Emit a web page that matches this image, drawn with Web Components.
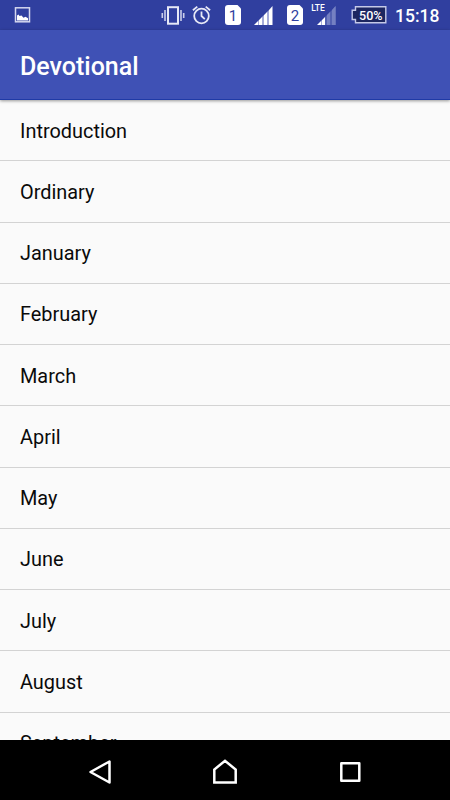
<!DOCTYPE html>
<html lang="en">
<head>
<meta charset="utf-8">
<title>Devotional</title>
<style>
  body {
    margin: 0;
    height: 800px;
    overflow: hidden;
    font-family: Roboto, sans-serif;
    background: #fafafa;
  }
</style>
</head>
<body>
<phone-screen>
  <status-bar slot="status"></status-bar>
  <app-bar slot="header">Devotional</app-bar>
  <list-item>Introduction</list-item>
  <list-item>Ordinary</list-item>
  <list-item>January</list-item>
  <list-item>February</list-item>
  <list-item>March</list-item>
  <list-item>April</list-item>
  <list-item>May</list-item>
  <list-item>June</list-item>
  <list-item>July</list-item>
  <list-item>August</list-item>
  <list-item>September</list-item>
  <nav-bar slot="nav"></nav-bar>
</phone-screen>

<script>
class PhoneScreen extends HTMLElement {
  constructor() {
    super();
    this.attachShadow({ mode: "open" });
    this.shadowRoot.innerHTML = `
      <style>
        :host {
          display: flex;
          flex-direction: column;
          width: 450px;
          height: 800px;
        }
        .list {
          flex: 1;
          min-height: 0;
          overflow: hidden;
          background: #fafafa;
        }
      </style>
      <slot name="status"></slot>
      <slot name="header"></slot>
      <div class="list"><slot></slot></div>
      <slot name="nav"></slot>
    `;
  }
}

class StatusBar extends HTMLElement {
  constructor() {
    super();
    this.attachShadow({ mode: "open" });
    this.shadowRoot.innerHTML = `
      <style>
        :host {
          display: flex;
          justify-content: space-between;
          flex: none;
          height: 30px;
          padding: 0 11px 0 14px;
          background: #303f9f;
          color: #fff;
        }
        svg {
          display: block;
          flex: none;
        }
        .right {
          display: flex;
        }
        .vibrate { margin-right: 7px; }
        .alarm { margin-right: 14px; }
        .signal { margin: 0 13px 0 12px; }
        .lte { margin: 0 15px 0 6px; }
        .clock {
          width: 44px;
          margin-left: 8px;
          font-size: 17.5px;
          font-weight: 500;
          line-height: 32px;
          white-space: nowrap;
        }
        text {
          font-family: Roboto, sans-serif;
          font-weight: 500;
        }
        .sim text {
          font-size: 15px;
          font-weight: 400;
          text-anchor: middle;
          fill: #303f9f;
        }
      </style>
      <svg width="17" height="30">
        <rect x="1.5" y="7.8" width="14" height="14" fill="none" stroke="#d5d8ef" stroke-width="1.5"/>
        <path d="M3 20.5v-5l1.5-1 1 1.5 2-.5 2 2.2 2-1 2.5 1.5v2.3z" fill="#fff"/>
      </svg>
      <div class="right">
        <svg class="vibrate" width="24" height="30" fill="none" stroke="#c9cdea" stroke-width="1.6">
          <rect x="7" y="7.2" width="10" height="16.5" stroke="#e6e8f6" stroke-width="2"/>
          <path d="M4 10v11M1.3 13v5M20 10v11M22.7 13v5"/>
        </svg>
        <svg class="alarm" width="19" height="30" fill="none" stroke="#e6e8f6" stroke-width="1.8">
          <circle cx="9.5" cy="16" r="7.3"/>
          <path d="M9.5 11.5V16l3.3 3.2M.9 10.2l4.4-3.6M18.1 10.2l-4.4-3.6"/>
        </svg>
        <svg class="sim" width="16" height="30">
          <path d="M3 5h9.5L16 8.500V22q0 3-3 3H3q-3 0-3-3V8q0-3 3-3z" fill="#fff"/>
          <text x="8" y="21">1</text>
        </svg>
        <svg class="signal" width="21" height="30">
          <path d="M1 25l4-4v4z" fill="#fff"/>
          <path d="M6 20l3-3v8H6zM11 15l3-3v13h-3zM16 10l3.5-4v19H16z" fill="#fff"/>
          <path d="M5 21l1-1v5H5zM9 17l2-2v10H9zM14 12l2-2v15h-2z" fill="#a4abd9"/>
        </svg>
        <svg class="sim" width="16" height="30">
          <path d="M3 5h9.5L16 8.500V22q0 3-3 3H3q-3 0-3-3V8q0-3 3-3z" fill="#fff"/>
          <text x="8" y="21">2</text>
        </svg>
        <svg class="lte" width="27" height="30">
          <text x="2.2" y="10.5" font-size="9" textLength="13.5" lengthAdjust="spacingAndGlyphs" fill="#fff">LTE</text>
          <path d="M8 25l4-4v4zM13 20l3-3v8h-3z" fill="#fff"/>
          <path d="M12 21l1-1v5h-1z" fill="#a4abd9"/>
          <path d="M16 17l11-11v19H16z" fill="#5361b1"/>
          <path d="M18 15l3-3v13h-3zM23 10l3.5-4v19H23z" fill="#7480c2"/>
        </svg>
        <svg class="battery" width="36" height="30">
          <path d="M4.5 6.8h30.3v16H4.5v-3.3H1.2v-9.3h3.3z" fill="#1d2660" stroke="#c5c9e8" stroke-width="1.4"/>
          <text x="8" y="19.5" font-size="12.5" textLength="23.5" lengthAdjust="spacingAndGlyphs" fill="#fff">50%</text>
        </svg>
        <div class="clock">15:18</div>
      </div>
    `;
  }
}

class AppBar extends HTMLElement {
  constructor() {
    super();
    this.attachShadow({ mode: "open" });
    this.shadowRoot.innerHTML = `
      <style>
        :host {
          display: flex;
          align-items: center;
          flex: none;
          box-sizing: border-box;
          height: 70px;
          padding: 4px 20px 0;
          border-bottom: 1px solid #1f3aa6;
          position: relative;
          background: #3f51b5;
          color: #fff;
          font-size: 25px;
          font-weight: 500;
          box-shadow: 0 1px 3px rgba(0, 0, 0, 0.4);
        }
      </style>
      <slot></slot>
    `;
  }
}

class ListItem extends HTMLElement {
  constructor() {
    super();
    this.attachShadow({ mode: "open" });
    this.shadowRoot.innerHTML = `
      <style>
        :host {
          display: flex;
          align-items: center;
          box-sizing: border-box;
          height: 61.25px;
          padding: 2px 20px 0;
          border-bottom: 1px solid #d3d3d3;
          color: #0a0a0a;
          font-size: 19.9px;
        }
      </style>
      <slot></slot>
    `;
  }
}

class NavBar extends HTMLElement {
  constructor() {
    super();
    this.attachShadow({ mode: "open" });
    this.shadowRoot.innerHTML = `
      <style>
        :host {
          display: flex;
          justify-content: center;
          gap: 95px;
          flex: none;
          height: 60px;
          background: #000;
        }
        svg {
          fill: none;
          stroke: #fff;
          stroke-width: 2.5;
          stroke-linejoin: round;
        }
        .home {
          stroke-linejoin: miter;
        }
      </style>
      <svg width="30" height="60"><path d="M24.5 21.5v21L5.5 32z"/></svg>
      <svg class="home" width="30" height="60"><path d="M4.3 42.5V29.5L15 20.8l10.7 8.7v13z"/></svg>
      <svg width="30" height="60"><rect x="6.3" y="23.3" width="18" height="17.5"/></svg>
    `;
  }
}

customElements.define("phone-screen", PhoneScreen);
customElements.define("status-bar", StatusBar);
customElements.define("app-bar", AppBar);
customElements.define("list-item", ListItem);
customElements.define("nav-bar", NavBar);
</script>
</body>
</html>
